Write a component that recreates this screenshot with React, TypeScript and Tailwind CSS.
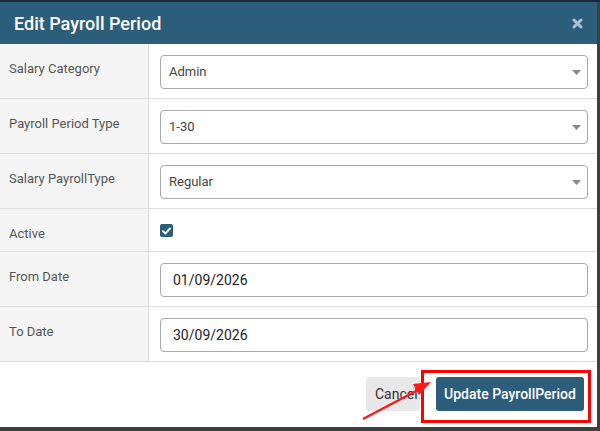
import * as React from "react"

type Row =
  | { label: string; kind: "select"; value: string }
  | { label: string; kind: "check" }
  | { label: string; kind: "date"; value: string }

const rows: Row[] = [
  { label: "Salary Category", kind: "select", value: "Admin" },
  { label: "Payroll Period Type", kind: "select", value: "1-30" },
  { label: "Salary PayrollType", kind: "select", value: "Regular" },
  { label: "Active", kind: "check" },
  { label: "From Date", kind: "date", value: "01/09/2026" },
  { label: "To Date", kind: "date", value: "30/09/2026" },
]

function SelectBox({ value }: { value: string }) {
  return (
    <div className="flex h-[34px] items-center justify-between rounded-[4px] border border-[#aaaaaa] bg-white pl-[8px] pr-[5px]">
      <span className="text-[13px] text-[#444]">{value}</span>
      <svg width="9" height="5" viewBox="0 0 9 5" className="mr-[1px]">
        <path d="M0 0h9L4.5 5z" fill="#888" />
      </svg>
    </div>
  )
}

function DateBox({ value }: { value: string }) {
  return (
    <div className="flex h-[34px] items-center rounded-[4px] border border-[#aaaaaa] bg-white pl-[12px]">
      <span className="text-[14px] text-[#222]">{value}</span>
    </div>
  )
}

export default function App() {
  return (
    <div
      className="relative h-[431px] w-[600px] overflow-hidden bg-[#3f3f3f]"
      style={{ fontFamily: "Roboto, 'Liberation Sans', sans-serif" }}
    >
      <div className="h-[2px] w-full bg-[#1b2835]" />
      <div className="w-[597px] bg-white">
        <div className="flex h-[42px] items-center justify-between bg-[#2c5d7b] pl-[14px] pr-[14px]">
          <h2 className="text-[18px] font-medium text-white">Edit Payroll Period</h2>
          <svg width="11" height="11" viewBox="0 0 11 11">
            <path d="M2 2l7 7M9 2l-7 7" stroke="#a9c3d4" strokeWidth="3" strokeLinecap="round" />
          </svg>
        </div>

        {rows.map((r) => (
          <div
            key={r.label}
            className={`grid grid-cols-[149px_1fr] border-b border-[#dddddd] ${r.kind === "check" ? "h-[43px]" : "h-[55px]"}`}
          >
            <div className="border-r border-[#dddddd] bg-[#f5f5f5] px-[9px] pt-[16px] text-[13px] leading-[18px] text-[#555]">
              {r.label}
            </div>
            <div className="pl-[11px] pr-[9px] pt-[11px]">
              {r.kind === "select" && <SelectBox value={r.value} />}
              {r.kind === "date" && <DateBox value={r.value} />}
              {r.kind === "check" && (
                <span className="mt-[4px] flex h-[13px] w-[13px] items-center justify-center rounded-[2px] bg-[#2c5d7b]">
                  <svg width="9" height="8" viewBox="0 0 9 8">
                    <path d="M1 4.2l2.3 2.3L8 1.5" stroke="white" strokeWidth="1.9" fill="none" strokeLinecap="round" strokeLinejoin="round" />
                  </svg>
                </span>
              )}
            </div>
          </div>
        ))}

        <div className="flex h-[65px] items-start justify-end gap-[16px] pr-[13px] pt-[15px]">
          <button className="h-[34px] w-[54px] rounded-[3px] bg-[#e8e8e8] pl-[9px] text-left text-[14px] text-[#333]">
            Cancel
          </button>
          <button className="h-[34px] w-[148px] rounded-[3px] bg-[#2c5d7b] text-[14px] font-medium text-white">
            Update PayrollPeriod
          </button>
        </div>
      </div>

      <div className="absolute left-[421px] top-[370px] h-[53px] w-[170px] border-[3px] border-[#ff0000]" />
      <svg className="absolute left-0 top-0" width="600" height="431" viewBox="0 0 600 431">
        <line x1="363" y1="419" x2="418" y2="390" stroke="#ff1a1a" strokeWidth="2.5" />
        <path d="M431 382L413 384L419 395z" fill="#ff1a1a" />
      </svg>
    </div>
  )
}
